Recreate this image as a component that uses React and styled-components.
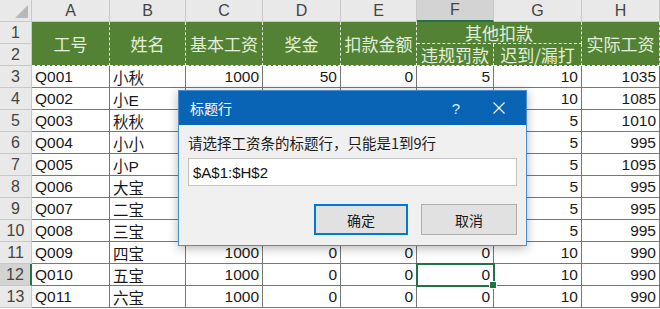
import React from 'react';
import styled, { createGlobalStyle } from 'styled-components';

const GlobalStyle = createGlobalStyle`
  * { box-sizing: border-box; }
  body { margin: 0; background: #fff; overflow: hidden; }
`;

const columns = ['A', 'B', 'C', 'D', 'E', 'F', 'G', 'H'];

// rows 4-10 of C:F sit under the dialog, so they stay blank here
const rows = [
  ['Q001', '小秋', 1000, 50, 0, 5, 10, 1035],
  ['Q002', '小E', '', '', '', '', 10, 1085],
  ['Q003', '秋秋', '', '', '', '', 5, 1010],
  ['Q004', '小小', '', '', '', '', 5, 995],
  ['Q005', '小P', '', '', '', '', 5, 1095],
  ['Q006', '大宝', '', '', '', '', 5, 995],
  ['Q007', '二宝', '', '', '', '', 5, 995],
  ['Q008', '三宝', '', '', '', '', 5, 995],
  ['Q009', '四宝', 1000, 0, 0, 0, 10, 990],
  ['Q010', '五宝', 1000, 0, 0, 0, 10, 990],
  ['Q011', '六宝', 1000, 0, 0, 0, 10, 990],
];

export default function App() {
  return (
    <Page>
      <GlobalStyle />
      <Sheet>
        <Corner />
        {columns.map((c) => (
          <ColHead key={c} $selected={c === 'F'}>{c}</ColHead>
        ))}

        <RowHead>1</RowHead>
        <TitleCell $rowSpan={2}>工号</TitleCell>
        <TitleCell $rowSpan={2}>姓名</TitleCell>
        <TitleCell $rowSpan={2}>基本工资</TitleCell>
        <TitleCell $rowSpan={2}>奖金</TitleCell>
        <TitleCell $rowSpan={2}>扣款金额</TitleCell>
        <TitleCell $colSpan={2}>其他扣款</TitleCell>
        <TitleCell $rowSpan={2}>实际工资</TitleCell>
        <RowHead>2</RowHead>
        <TitleCell>违规罚款</TitleCell>
        <TitleCell>迟到/漏打</TitleCell>

        {rows.map((r, i) => {
          const n = i + 3;
          return (
            <React.Fragment key={n}>
              <RowHead $selected={n === 12}>{n}</RowHead>
              {r.map((v, j) => (
                <Cell key={j} $right={j > 1} $active={n === 12 && j === 5}>
                  {v}
                </Cell>
              ))}
            </React.Fragment>
          );
        })}
      </Sheet>

      <Dialog>
        <TitleBar>
          <Title>标题行</Title>
          <TitleButtons>
            <Help>?</Help>
            <Close>
              <svg width="12" height="12" viewBox="0 0 12 12">
                <path d="M0.5 0.5 L11.5 11.5 M11.5 0.5 L0.5 11.5" stroke="#fff" strokeWidth="1.1" />
              </svg>
            </Close>
          </TitleButtons>
        </TitleBar>
        <Body>
          <Label>请选择工资条的标题行，只能是1到9行</Label>
          <Input>$A$1:$H$2</Input>
          <Buttons>
            <Button $primary>确定</Button>
            <Button>取消</Button>
          </Buttons>
        </Body>
      </Dialog>
    </Page>
  );
}

const Page = styled.div`
  position: relative;
  width: 660px;
  height: 309px;
  overflow: hidden;
`;

const Sheet = styled.div`
  display: grid;
  grid-template-columns: 32px 78px 76px 77px 78px 76px 77px 88px 78px;
  grid-auto-rows: 22px;
  font-family: "Liberation Sans", "Noto Sans CJK SC", sans-serif;
  font-size: 15.5px;
  color: #1a1a1a;
`;

const Corner = styled.div`
  position: relative;
  background: #e9e9e9;
  border-right: 1px solid #c8c8c8;
  border-bottom: 1px solid #c8c8c8;
  &::after {
    content: '';
    position: absolute;
    right: 3px;
    bottom: 3px;
    border-left: 13px solid transparent;
    border-bottom: 13px solid #b8b8b8;
  }
`;

const ColHead = styled.div`
  display: flex;
  align-items: center;
  justify-content: center;
  background: ${(p) => (p.$selected ? '#d3d3d3' : '#e9e9e9')};
  border-right: 1px solid #c8c8c8;
  border-bottom: ${(p) => (p.$selected ? '2px solid #217346' : '1px solid #c8c8c8')};
  color: #444;
  font-size: 16px;
`;

const RowHead = styled.div`
  grid-column: 1;
  display: flex;
  align-items: center;
  justify-content: center;
  background: ${(p) => (p.$selected ? '#d3d3d3' : '#e9e9e9')};
  border-right: ${(p) => (p.$selected ? '2px solid #217346' : '1px solid #c8c8c8')};
  border-bottom: 1px solid #c8c8c8;
  color: #444;
  font-size: 16px;
`;

const TitleCell = styled.div`
  grid-row: span ${(p) => p.$rowSpan || 1};
  grid-column: span ${(p) => p.$colSpan || 1};
  display: flex;
  align-items: center;
  justify-content: center;
  background: #548235;
  color: #e2efda;
  font-family: "Noto Sans CJK SC", sans-serif;
  font-size: 17px;
  line-height: 19px;
  white-space: nowrap;
  border-right: 1px dashed #e2efda;
  border-bottom: 1px dashed #e2efda;
`;

const Cell = styled.div`
  position: relative;
  display: flex;
  align-items: center;
  justify-content: ${(p) => (p.$right ? 'flex-end' : 'flex-start')};
  padding: 0 3px;
  background: #fff;
  border-right: 1px solid #777;
  border-bottom: 1px solid #777;
  white-space: nowrap;
  ${(p) =>
    p.$active &&
    `
    outline: 2px solid #217346;
    outline-offset: -1px;
    z-index: 1;
    &::after {
      content: '';
      position: absolute;
      right: -4px;
      bottom: -4px;
      width: 6px;
      height: 6px;
      background: #217346;
      border: 1px solid #fff;
    }
  `}
`;

const Dialog = styled.div`
  position: absolute;
  left: 178px;
  top: 90px;
  width: 349px;
  height: 156px;
  display: flex;
  flex-direction: column;
  background: #f0f0f0;
  border: 1px solid #4a8fd0;
  box-shadow: 0 2px 10px rgba(0, 0, 0, 0.3);
  font-family: "Noto Sans CJK SC", "Liberation Sans", sans-serif;
`;

const TitleBar = styled.div`
  height: 34px;
  display: flex;
  align-items: center;
  justify-content: space-between;
  padding-left: 11px;
  background: #0a64b6;
  color: #fff;
`;

const Title = styled.div`
  font-size: 14px;
`;

const TitleButtons = styled.div`
  display: flex;
  align-items: center;
  height: 100%;
`;

const Help = styled.div`
  width: 40px;
  text-align: center;
  font-size: 15px;
  font-family: "Liberation Sans", sans-serif;
  color: #d9e8f7;
`;

const Close = styled.div`
  width: 46px;
  height: 100%;
  display: flex;
  align-items: center;
  justify-content: center;
  margin-right: 4px;
`;

const Body = styled.div`
  flex: 1;
  display: flex;
  flex-direction: column;
  padding: 8px 9px 0 9px;
`;

const Label = styled.div`
  font-size: 14.5px;
  line-height: 20px;
  color: #1a1a1a;
`;

const Input = styled.div`
  margin-top: 5px;
  height: 28px;
  display: flex;
  align-items: center;
  padding-left: 4px;
  background: #fff;
  border: 1px solid #c4c4c4;
  font-family: "Liberation Sans", sans-serif;
  font-size: 15px;
  color: #111;
`;

const Buttons = styled.div`
  display: flex;
  justify-content: flex-end;
  gap: 13px;
  margin-top: 18px;
`;

const Button = styled.div`
  width: ${(p) => (p.$primary ? '94px' : '96px')};
  height: 31px;
  display: flex;
  align-items: center;
  justify-content: center;
  background: #e1e1e1;
  border: ${(p) => (p.$primary ? '2px solid #0078d7' : '1px solid #adadad')};
  font-size: 14px;
  color: #1a1a1a;
`;
